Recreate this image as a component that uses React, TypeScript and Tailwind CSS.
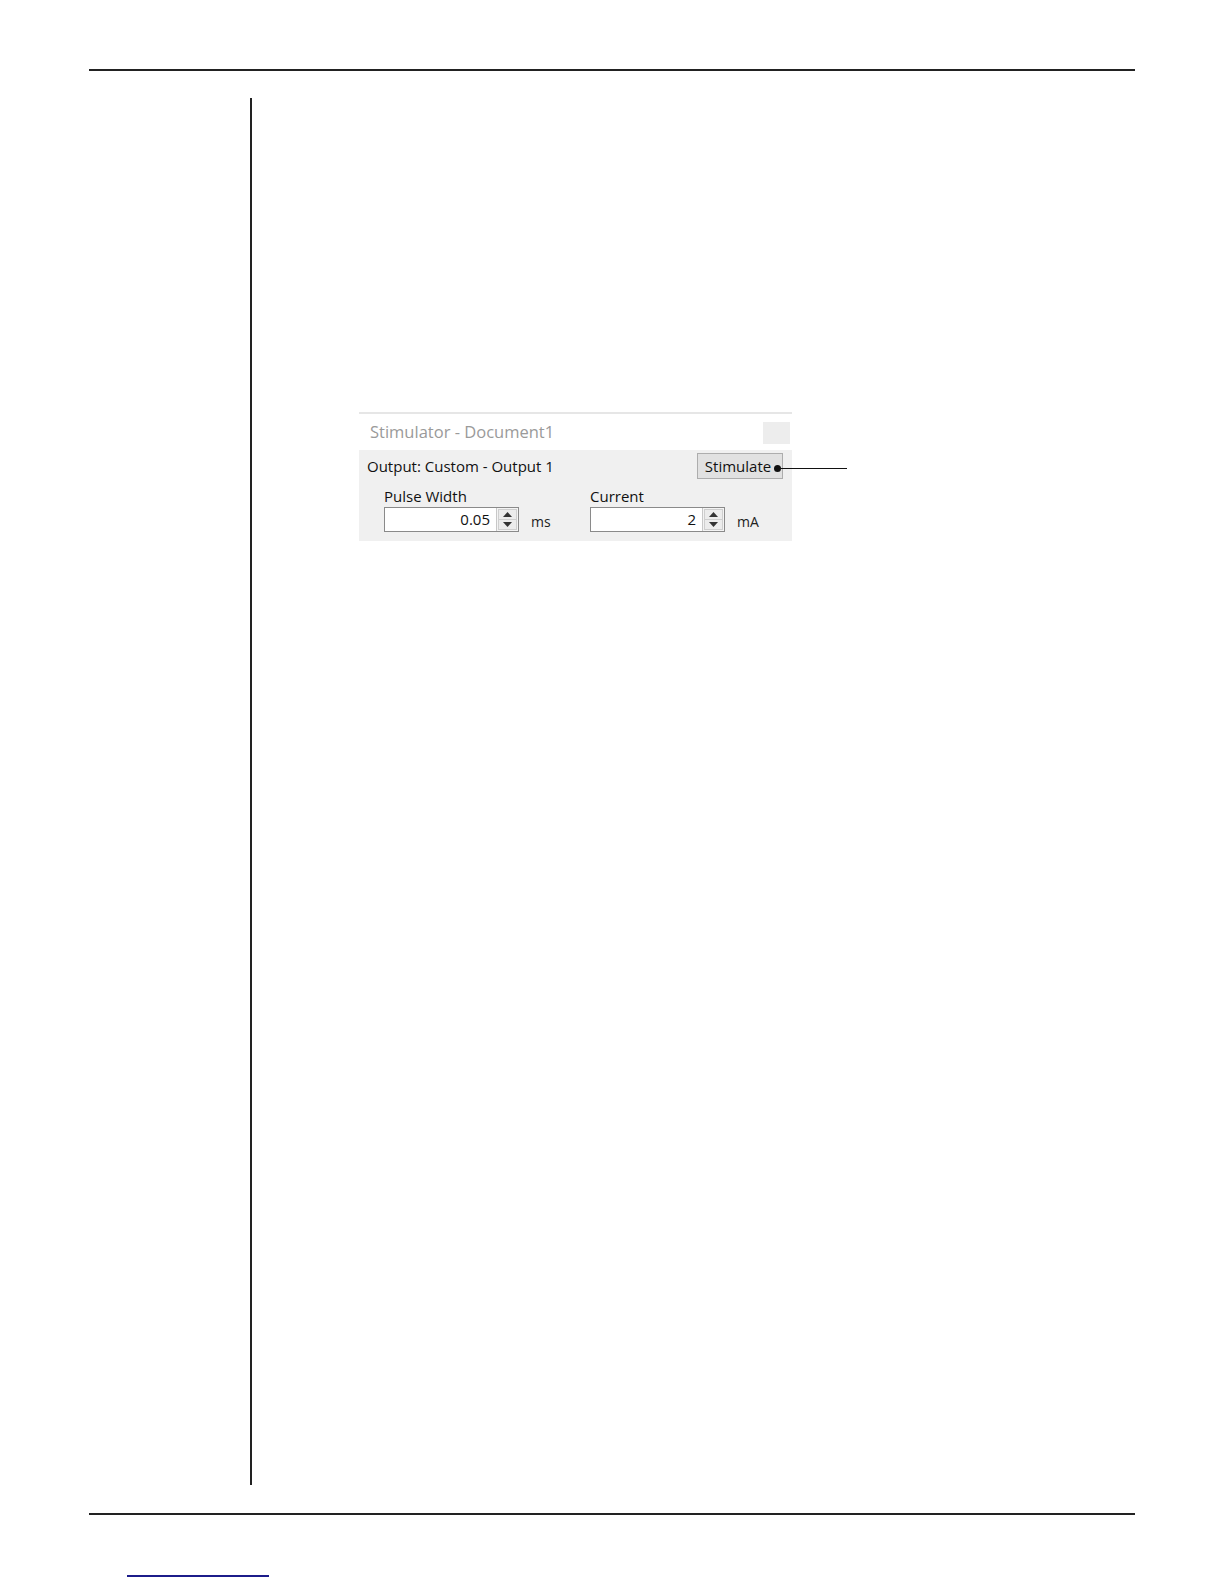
import React from 'react';

function Spinner() {
  return (
    <div className="flex flex-col w-[22px] h-full border-l border-[#c8c8c8] bg-[#f4f4f4] p-[1px]">
      <div className="flex-1 flex items-center justify-center border border-[#cfcfcf] bg-[#ececec]">
        <svg width="9" height="5" viewBox="0 0 9 5">
          <path d="M4.5 0 L9 5 L0 5 Z" fill="#333" />
        </svg>
      </div>
      <div className="flex-1 flex items-center justify-center border border-t-0 border-[#cfcfcf] bg-[#ececec]">
        <svg width="9" height="5" viewBox="0 0 9 5">
          <path d="M0 0 L9 0 L4.5 5 Z" fill="#333" />
        </svg>
      </div>
    </div>
  );
}

function NumberField({ label, value, unit, width }: { label: string; value: string; unit: string; width: string }) {
  return (
    <div className={`flex flex-col shrink-0 ${width}`}>
      <span className="text-[15px] leading-[18px] text-[#111]">{label}</span>
      <div className="flex items-center mt-[2px]">
        <div className="flex w-[135px] h-[25px] bg-white border border-[#8a8a8a]">
          <div className="flex-1 flex items-center justify-end pr-[6px] text-[15px] text-[#111]">{value}</div>
          <Spinner />
        </div>
        <span className="ml-[12px] text-[14px] text-[#222] mt-[4px]">{unit}</span>
      </div>
    </div>
  );
}

export default function App() {
  return (
    <div className="w-[1224px] h-[1584px] bg-white" style={{ fontFamily: '"Open Sans", "Noto Sans", sans-serif' }}>
      <div className="pt-[69px] px-[89px]">
        <div className="h-[2px] bg-[#222]" />
      </div>

      <div className="flex mt-[27px] h-[1387px]">
        <div className="w-[250px]" />
        <div className="w-[2px] bg-[#222]" />
        <div className="pl-[107px] pt-[314px]">
          {/* Stimulator window */}
          <div className="relative w-[433px] border-t-2 border-[#e6e6e6]">
            <div className="flex items-center justify-between h-[36px] bg-white pl-[11px] pr-[2px]">
              <span className="text-[16.5px] text-[#9a9a9a]">Stimulator - Document1</span>
              <div className="w-[27px] h-[22px] bg-[#ededed] mt-[2px]" />
            </div>
            <div className="bg-[#f0f0f0] pl-[8px] pr-[9px] pt-[3px] pb-[9px]">
              <div className="flex items-center justify-between h-[26px]">
                <span className="text-[15px] text-[#111]">Output: Custom - Output 1</span>
                <button className="w-[86px] h-[26px] bg-[#e1e1e1] border border-[#adadad] text-[15px] text-[#111] flex items-center justify-center pr-[4px]">
                  Stimulate
                </button>
              </div>
              <div className="flex pl-[17px] mt-[8px]">
                <NumberField label="Pulse Width" value="0.05" unit="ms" width="w-[206px]" />
                <NumberField label="Current" value="2" unit="mA" width="w-auto" />
              </div>
            </div>
            {/* callout */}
            <div className="absolute left-[415px] top-[51px] flex items-center">
              <div className="w-[7px] h-[7px] rounded-full bg-[#111]" />
              <div className="w-[66px] h-[1px] bg-[#111]" />
            </div>
          </div>
        </div>
      </div>

      <div className="mt-[28px] px-[89px]">
        <div className="h-[2px] bg-[#222]" />
      </div>
      <div className="mt-[60px] ml-[127px] w-[142px] h-[2px] bg-[#1c1c8a]" />
    </div>
  );
}
